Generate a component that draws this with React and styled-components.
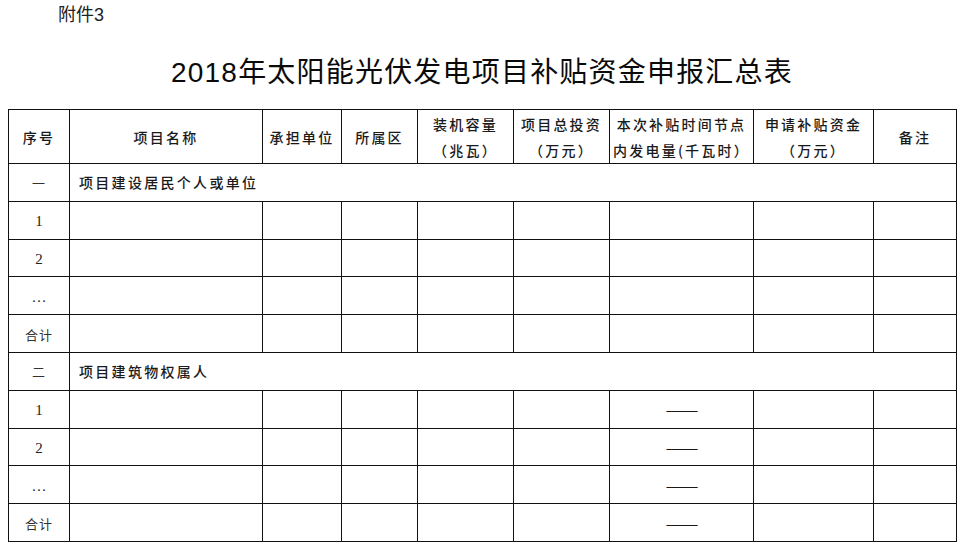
import React from "react";
import styled, { createGlobalStyle } from "styled-components";

const Global = createGlobalStyle`
  html, body { margin: 0; padding: 0; background: #fff; }
  body { font-family: "Noto Sans CJK SC", "Liberation Sans", sans-serif; color: #111; }
`;

const Page = styled.div`
  width: 961px;
  height: 548px;
  padding: 4px 0 0 8px;
  box-sizing: border-box;
  overflow: hidden;
  background: #fff;
`;

const Attachment = styled.div`
  margin-left: 50px;
  font-family: "Liberation Sans", "Noto Sans CJK SC", sans-serif;
  font-size: 18px;
  line-height: 22px;
  color: #222;
`;

const Title = styled.h1`
  margin: 29px 0 0 0;
  width: 948px;
  text-align: center;
  font-family: "Liberation Sans", "Noto Sans CJK SC", sans-serif;
  font-weight: 400;
  font-size: 28px;
  letter-spacing: 1.2px;
  line-height: 36px;
  color: #0a0a0a;
`;

const Table = styled.table`
  margin-top: 18px;
  width: 948px;
  border-collapse: collapse;
  table-layout: fixed;
`;

const Cell = styled.td`
  border: 1.5px solid #111;
  padding: 0;
  text-align: ${(p) => (p.$left ? "left" : "center")};
  vertical-align: middle;
  font-size: 14px;
  color: #1a1a1a;
`;

const HeadCell = styled(Cell).attrs({ as: "th" })`
  font-weight: 500;
  letter-spacing: 2.2px;
  line-height: 26px;
`;

const HeadRow = styled.tr`
  height: 54px;
`;

const Row = styled.tr`
  height: 37.8px;
`;

const SectionText = styled.span`
  padding-left: 9px;
  font-weight: 500;
  letter-spacing: 2.3px;
  font-size: 14px;
`;

const Num = styled.span`
  font-family: "Liberation Serif", serif;
  font-size: 15px;
  color: #222;
`;

const Total = styled.span`
  font-size: 13px;
  letter-spacing: 1px;
  color: #333;
`;

const Dash = styled.span`
  font-family: "Liberation Serif", serif;
  font-size: 16px;
  letter-spacing: -1px;
`;

const widths = [61, 193, 79, 76, 96, 96, 144, 120, 83];

const headers = [
  ["序号"],
  ["项目名称"],
  ["承担单位"],
  ["所属区"],
  ["装机容量", "（兆瓦）"],
  ["项目总投资", "（万元）"],
  ["本次补贴时间节点", "内发电量(千瓦时）"],
  ["申请补贴资金", "（万元）"],
  ["备注"],
];

const sections = [
  { mark: "一", name: "项目建设居民个人或单位", dash: false },
  { mark: "二", name: "项目建筑物权属人", dash: true },
];

const rowLabels = [
  { text: "1", kind: "num" },
  { text: "2", kind: "num" },
  { text: "…", kind: "num" },
  { text: "合计", kind: "total" },
];

function DataRow({ label, dash }) {
  return (
    <Row>
      <Cell>
        {label.kind === "num" ? <Num>{label.text}</Num> : <Total>{label.text}</Total>}
      </Cell>
      {widths.slice(1).map((_, i) => (
        <Cell key={i}>{dash && i === 5 ? <Dash>——</Dash> : null}</Cell>
      ))}
    </Row>
  );
}

export default function App() {
  return (
    <Page>
      <Global />
      <Attachment>附件3</Attachment>
      <Title>2018年太阳能光伏发电项目补贴资金申报汇总表</Title>
      <Table>
        <colgroup>
          {widths.map((w, i) => (
            <col key={i} style={{ width: w }} />
          ))}
        </colgroup>
        <tbody>
          <HeadRow>
            {headers.map((lines, i) => (
              <HeadCell key={i}>
                {lines.map((l, j) => (
                  <div key={j}>{l}</div>
                ))}
              </HeadCell>
            ))}
          </HeadRow>
          {sections.map((s) => (
            <React.Fragment key={s.mark}>
              <Row>
                <Cell>
                  <Total>{s.mark}</Total>
                </Cell>
                <Cell $left colSpan={8}>
                  <SectionText>{s.name}</SectionText>
                </Cell>
              </Row>
              {rowLabels.map((l, i) => (
                <DataRow key={i} label={l} dash={s.dash} />
              ))}
            </React.Fragment>
          ))}
        </tbody>
      </Table>
    </Page>
  );
}
